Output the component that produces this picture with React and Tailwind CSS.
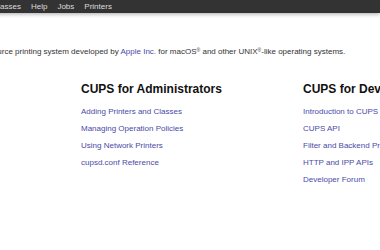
import React from 'react';

const adminLinks = [
  'Adding Printers and Classes',
  'Managing Operation Policies',
  'Using Network Printers',
  'cupsd.conf Reference',
];

const devLinks = [
  'Introduction to CUPS Programming',
  'CUPS API',
  'Filter and Backend Programming',
  'HTTP and IPP APIs',
  'Developer Forum',
];

function Column({ title, links }) {
  return (
    <div className="w-[222px] shrink-0">
      <h2 className="text-[12px] leading-[14px] font-bold text-[#111] whitespace-nowrap">{title}</h2>
      <ul className="mt-[7px]">
        {links.map(l => (
          <li key={l} className="leading-[17px] whitespace-nowrap">
            <a href="#" className="text-[#4a4aa8]">{l}</a>
          </li>
        ))}
      </ul>
    </div>
  );
}

export default function App() {
  return (
    <div className="w-[380px] h-[250px] overflow-hidden bg-white font-['Liberation_Sans',Arial,sans-serif] text-[8px]">
      {/* top bar */}
      <nav className="h-[13px] bg-[#333] shadow-[0_1px_4px_rgba(0,0,0,0.35)] flex items-center gap-[10px] -ml-[7.5px] text-[#ddd] whitespace-nowrap">
        {['Classes', 'Help', 'Jobs', 'Printers'].map(item => (
          <a key={item} href="#">{item}</a>
        ))}
      </nav>

      <p className="mt-[34px] -ml-[141px] whitespace-nowrap leading-[10px] text-[#333]">
        CUPS is the standards-based, open source printing system developed by{' '}
        <a href="#" className="text-[#4a4aa8]">Apple Inc.</a> for macOS<sup className="text-[5px]">®</sup> and other UNIX<sup className="text-[5px]">®</sup>-like operating systems.
      </p>

      <div className="mt-[25px] pl-[81px] flex">
        <Column title="CUPS for Administrators" links={adminLinks} />
        <Column title="CUPS for Developers" links={devLinks} />
      </div>
    </div>
  );
}
